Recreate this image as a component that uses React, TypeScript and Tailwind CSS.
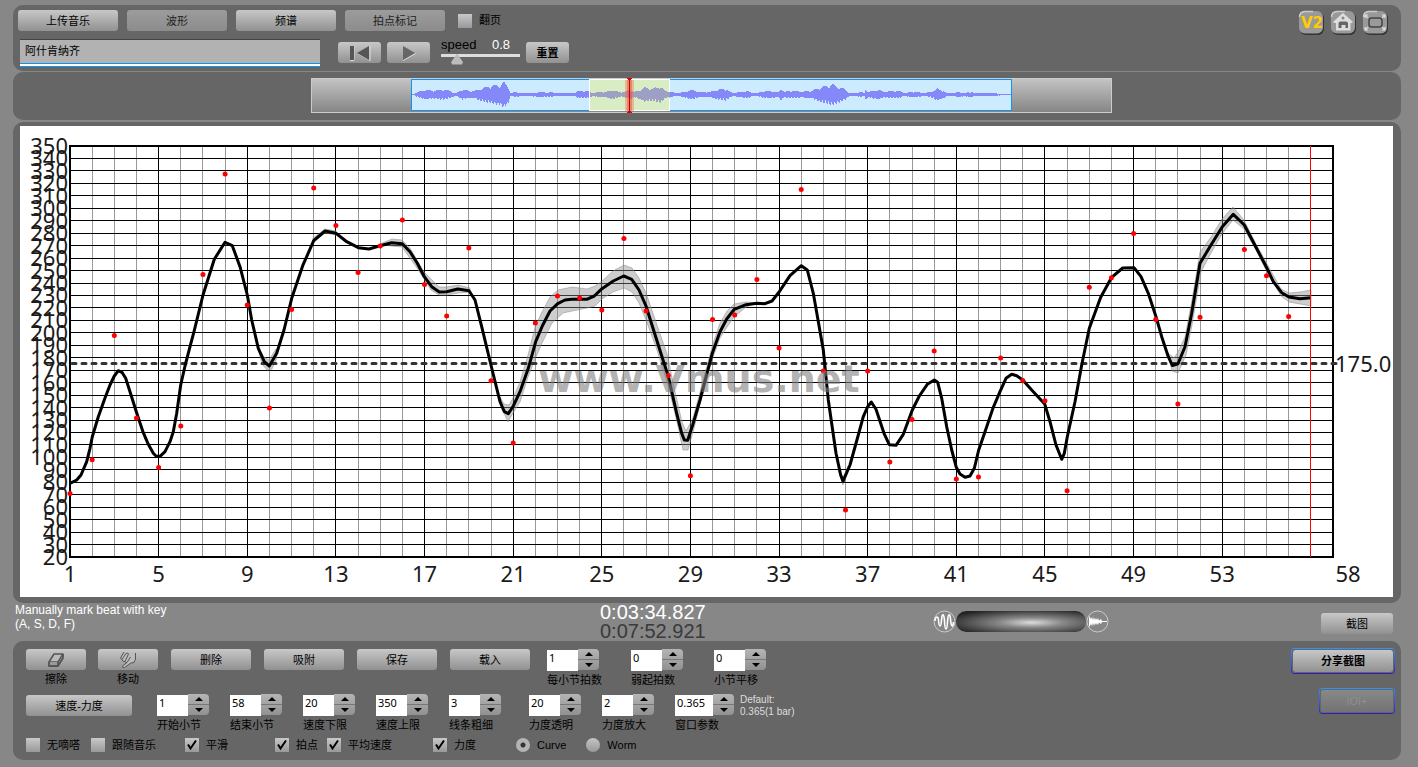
import { useState } from "react";
import type { ReactNode } from "react";
import clsx from "clsx";

const DOTS = [
  493.5, 459.7, 335.5, 418, 467.5, 426, 274.5, 174, 305, 408, 309.5, 188, 225.5,
  272.5, 246, 220, 284.5, 316, 248, 380.7, 443, 323, 296, 298, 310, 238.5, 311,
  375.5, 475.7, 319.5, 315, 279.5, 348, 189.5, 371, 510, 371, 462, 419.5, 351,
  479, 477, 358, 380.5, 400.7, 490.7, 287.3, 277.7, 233.5, 319.5, 404, 317.3,
  null, 249.5, 275.7, 316.5,
];

const CURVE =
  "70,483.3 76.7,480 81,475 86.7,461.7 90,448.3 92.3,436.7 98.3,416.7 105,398 110,385 114.3,376 118.3,370.7 122.3,372.7 125.7,378.3 130,391.7 136.3,411.7 143.3,432.7 148.3,444.3 153.3,453.3 156,456 160,456.3 165,451.7 170,441.7 173.3,431.7 176.7,413.3 180.7,385 185,366 190,346.7 194,331.7 203,295 214.3,259.3 225,242.3 232.3,245.7 240,266.7 247.3,295 251.7,320 258.3,348.3 264.3,361.7 269.3,366 276.7,353.3 284,330 291.7,298.3 302.7,265.7 313.7,240.7 325,231 336,233.3 346.7,241.7 358.3,247.7 369,249 380,245.7 391.7,242.7 402.3,243.7 410,251.7 417.3,263.3 424.3,276.7 431.7,286.7 439.3,292 446.7,291.7 457.7,289 469,290.7 475,300 481.7,326.7 490.7,364 500,401.7 504.3,411.7 508.3,413.7 513.3,406 520,391.7 528.3,368.3 535.7,341.7 542.3,326 550,311 557.7,303.7 565,300 571.7,299.3 586.7,299.3 594.3,296 602,288.7 613.3,281 623.7,276 631.7,279.3 639,290 646,306 656.7,340 668.3,376.7 676.7,413.3 681.7,433.3 684.3,440 687.7,440.3 692.7,425 700,400 708.3,368.3 712.3,353.3 720,331.7 726.7,319 734.3,309.3 746,304.7 757,303.3 765,303.7 772,301 779.3,291.7 790,275.7 801.3,265.7 807.3,270 813.3,293.3 823.3,350 828.3,400 836,453.3 840.7,475 843,481.3 850,465 858.3,435 863.3,416.7 867.7,406.7 871.3,402 876,409.3 884,433.3 889.3,444.7 896,445.3 903.3,434.3 912.3,410 919.3,396 927.3,384.3 934.3,380 937.7,382.3 941.7,398.3 946.7,426.7 951.7,450 956.3,467.3 960,474 965,477.3 970,476 974.3,468.3 978.7,450 985,431.7 993.3,407.3 1000,391.7 1006,378.3 1011.7,374.3 1016.7,375.7 1022.7,380 1033.3,391.7 1044.7,404 1050,421.7 1056,445 1061.7,459.3 1064.3,453.3 1067.3,436.7 1075,401.7 1081.7,365 1089.3,328.3 1100.7,297.3 1111.7,277.3 1122.7,268 1134,267.7 1141,276.7 1148.3,293.3 1156,316.7 1161.7,336.7 1168.3,356.7 1172.3,365.5 1178,363.7 1185,346.7 1191.7,313.3 1200,263.3 1211,245 1222.3,226.7 1233.3,214.3 1244.3,225 1255.7,246.7 1266.7,267.7 1273.3,281.7 1281.7,292.7 1289,297 1300,298.7 1311,297.7";

const BANDS = [
  "258,348 264,357 269,360 276,349 277,358 272,369 267,370 262,364",
  "313,238 325,229 336,231 336,235 325,233 313,243",
  "380,244 392,239 402,240 410,248 424,272 439,287 447,287 458,285 470,288 470,292 458,293 447,295 439,295 431,290 417,268 402,247 391,246",
  "500,397 504,404 509,405 513,398 520,382 528,355 535,327 542,312 550,297 558,290 572,287 587,289 595,286 602,281 613,271 624,265 632,268 639,278 646,293 657,325 668,357 673,383 682,422 686,431 693,418 700,392 712,347 720,323 727,311 734,304 746,302 757,303 746,307 734,317 727,327 720,338 712,360 700,405 693,432 688,450 683,450 677,422 668,385 657,350 646,320 639,303 632,292 624,288 613,292 602,299 595,306 587,308 572,311 563,313 552,323 542,343 536,357 528,377 520,402 513,413 508,422 504,413",
  "838,470 843,477 848,466 843,485",
  "1168,353 1174,358 1178,352 1185,337 1192,300 1200,252 1211,237 1222,219 1233,207 1244,220 1256,244 1267,264 1281,289 1289,293 1300,292 1311,290 1311,306 1300,304 1289,302 1281,296 1267,272 1256,250 1244,229 1233,220 1222,234 1211,253 1201,272 1192,325 1186,355 1178,373 1172,371",
];

// [x, amplitude] pairs of the audio overview
const ENVELOPE = [
  [415, 1], [420, 3], [426, 4], [432, 3], [440, 4], [446, 4], [452, 2], [456, 1],
  [462, 4], [468, 3], [474, 3], [480, 5], [488, 7], [494, 8], [500, 9], [503, 11],
  [508, 7], [510, 1], [516, 2], [520, 1], [530, 1], [540, 2], [560, 1], [575, 1],
  [577, 3], [588, 3], [592, 1], [600, 2], [606, 2], [612, 4], [618, 2], [624, 2],
  [630, 4], [634, 2], [640, 4], [644, 6], [650, 5], [656, 6], [660, 7], [665, 3],
  [670, 2], [676, 1], [684, 2], [690, 4], [695, 3], [700, 2], [710, 2], [718, 4],
  [725, 5], [732, 1], [740, 2], [747, 3], [752, 1], [757, 1], [765, 3], [770, 3],
  [778, 2], [781, 5], [784, 2], [790, 3], [798, 3], [802, 2], [806, 3], [812, 3],
  [818, 6], [824, 7], [831, 9], [838, 7], [845, 4], [849, 1], [856, 1], [860, 2],
  [864, 1], [865, 5], [868, 2], [872, 3], [878, 4], [883, 2], [892, 3], [898, 3],
  [904, 1], [914, 2], [925, 1], [930, 2], [937, 5], [943, 3], [946, 1], [954, 1],
  [958, 2], [964, 1], [970, 2], [975, 1], [985, 1], [1010, 0],
];

const beatX = (beat: number) => 70 + ((beat - 1) * 1263) / 57;
const tempoY = (tempo: number) => 146 + ((350 - tempo) * 411) / 330;

const wavePath = (from: number, to: number) => {
  let d = "";
  for (let i = 0; i < ENVELOPE.length - 1; i++) {
    const [x0, a0] = ENVELOPE[i];
    const [x1, a1] = ENVELOPE[i + 1];
    for (let x = x0; x < x1; x++) {
      if (x < from || x >= to) continue;
      const amp = a0 + ((a1 - a0) * (x - x0)) / (x1 - x0);
      const up = amp * (0.7 + 0.45 * Math.abs(Math.sin(x * 12.9)));
      const down = amp * (0.7 + 0.45 * Math.abs(Math.sin(x * 7.3)));
      d += `M${x + 0.5} ${(94 - up).toFixed(1)}V${(95 + down).toFixed(1)}`;
    }
  }
  return d;
};

const Panel = ({ className, children }: { className?: string; children: ReactNode }) => (
  <section className={clsx("rounded-[10px] bg-[#666]", className)}>{children}</section>
);

interface BtnProps {
  children: ReactNode;
  className?: string;
  pressed?: boolean;
  label?: string;
}

const Btn = ({ children, className, pressed, label }: BtnProps) => (
  <button
    type="button"
    aria-label={label}
    aria-pressed={pressed}
    className={clsx(
      "flex h-[21px] shrink-0 items-center justify-center rounded-[3px] bg-linear-to-b pt-px text-[11px] leading-none whitespace-nowrap",
      pressed
        ? "from-[#9c9c9c] to-[#8c8c8c] text-[#222]"
        : "from-[#c8c8c8] to-[#919191] text-black",
      className
    )}
  >
    {children}
  </button>
);

interface TickProps {
  label: string;
  checked?: boolean;
  className?: string;
}

const Tick = ({ label, checked = false, className }: TickProps) => {
  const [on, setOn] = useState(checked);
  return (
    <label className={clsx("flex h-[14px] items-center gap-[7px] whitespace-nowrap", className)}>
      <span className="relative block h-[14px] w-[14px]">
        <input
          type="checkbox"
          checked={on}
          onChange={() => setOn(!on)}
          className="block h-[14px] w-[14px] appearance-none bg-linear-to-b from-[#c8c8c8] to-[#999]"
        />
        {on && (
          <svg viewBox="0 0 14 14" className="pointer-events-none absolute inset-0">
            <path d="M3 6.500L5.500 10.500L11 2.500" fill="none" stroke="#000" strokeWidth="2" />
          </svg>
        )}
      </span>
      {label}
    </label>
  );
};

interface StepperProps {
  id: string;
  label: string;
  value: string;
  step?: number;
  wide?: boolean;
  className?: string;
}

const Stepper = ({ id, label, value, step = 1, wide, className }: StepperProps) => {
  const [current, setCurrent] = useState(value);
  const bump = (by: number) =>
    setCurrent(String(Number((Number(current) + by).toFixed(3))));

  return (
    <div className={clsx("shrink-0", wide ? "w-[59px]" : "w-[52px]", className)}>
      <div className="flex h-[22px]">
        <input
          id={id}
          value={current}
          onChange={(e) => setCurrent(e.target.value)}
          className={clsx(
            "mt-px h-[21px] bg-white pb-[6px] pl-[2px] font-['Noto_Sans'] text-[11px] leading-none text-black outline-none",
            wide ? "w-[38px]" : "w-[31px]"
          )}
        />
        <div className="flex h-[21px] w-[21px] flex-col overflow-hidden rounded-r-sm bg-linear-to-b from-[#b5b5b5] to-[#919191]">
          <button
            type="button"
            aria-label={`${label} +`}
            onClick={() => bump(step)}
            className="flex flex-1 items-center justify-center border-b border-[#777]"
          >
            <svg width="8" height="4" viewBox="0 0 8 4"><path d="M0 4L4 0L8 4Z" /></svg>
          </button>
          <button
            type="button"
            aria-label={`${label} -`}
            onClick={() => bump(-step)}
            className="flex flex-1 items-center justify-center"
          >
            <svg width="8" height="4" viewBox="0 0 8 4"><path d="M0 0L4 4L8 0Z" /></svg>
          </button>
        </div>
      </div>
      <label htmlFor={id} className="block leading-[18px] whitespace-nowrap">
        {label}
      </label>
    </div>
  );
};

const TopIcon = ({ label, children }: { label: string; children: ReactNode }) => (
  <button type="button" aria-label={label}>
    <svg width="26" height="25" viewBox="0 0 26 25" className="block">
      <rect x="2" y="2" width="24" height="23" rx="6" fill="#333" />
      <rect x="1" y="1" width="24" height="22.500" rx="6" fill="#999" />
      <path d="M1.500 7Q1.500 2 7 1.500H15" fill="none" stroke="#ccc" strokeWidth="1.500" />
      {children}
    </svg>
  </button>
);

const Overview = () => (
  <svg viewBox="311 78 801 35" className="block h-[35px] w-[801px]" shapeRendering="crispEdges">
    <defs>
      <linearGradient id="track" x1="0" y1="0" x2="0" y2="1">
        <stop offset="0" stopColor="#c4c4c4" />
        <stop offset="1" stopColor="#858585" />
      </linearGradient>
    </defs>
    <rect x="311.500" y="78.500" width="800" height="34" fill="url(#track)" stroke="#ccc" />
    <rect x="411.500" y="79.500" width="600" height="31" fill="#cdebff" stroke="#1693ea" />
    <path d="M412 94.500H1011" stroke="#8488f8" />
    <path d={wavePath(411, 590)} stroke="#8488f8" />
    <path d={wavePath(670, 1011)} stroke="#8488f8" />
    <rect x="589.500" y="79.500" width="80" height="31" fill="#d9edc4" stroke="#fff" />
    <path d="M590 94.500H669" stroke="#9da0c4" />
    <path d={wavePath(590, 670)} stroke="#9da0c4" />
    <rect x="625" y="80" width="9" height="31" fill="#f26b55" fillOpacity="0.4" />
    <rect x="627" y="80" width="5" height="31" fill="#e83a30" fillOpacity="0.4" />
    <path d="M629.500 79V112" stroke="#c00000" />
    <path d="M627 78H632L629.500 81ZM627 113H632L629.500 110Z" fill="#e00000" />
  </svg>
);

const TempoChart = () => {
  const tempos = Array.from({ length: 34 }, (_, i) => 350 - i * 10);
  const beats = Array.from({ length: 58 }, (_, i) => i + 1);
  const right = beatX(58);

  return (
    <svg
      viewBox="20 126 1373 471"
      className="block w-full bg-white font-['Noto_Sans',sans-serif]"
      fontSize="22"
      fill="#1a1a1a"
    >
      <g shapeRendering="crispEdges">
        {beats.map((beat) => (
          <line
            key={beat}
            x1={beatX(beat)}
            x2={beatX(beat)}
            y1="146"
            y2="557"
            stroke={beat % 4 === 1 ? "#000" : "#999"}
          />
        ))}
        {tempos.map((tempo) => (
          <line key={tempo} x1="70" x2={right} y1={tempoY(tempo)} y2={tempoY(tempo)} stroke="#000" />
        ))}
        <rect x="70" y="146" width="1263" height="411" fill="none" stroke="#000" strokeWidth="2" />
      </g>

      {tempos.map((tempo) => (
        <text key={tempo} x="68" y={tempoY(tempo) + 8} textAnchor="end">
          {tempo}
        </text>
      ))}
      {beats
        .filter((beat) => beat % 4 === 1 && beat < 57)
        .map((beat) => (
          <text key={beat} x={beatX(beat)} y="582" textAnchor="middle">
            {beat}
          </text>
        ))}
      <text x="1348" y="582" textAnchor="middle">58</text>

      {BANDS.map((points) => (
        <polygon key={points} points={points} fill="#888" fillOpacity="0.42" stroke="#888" strokeOpacity="0.5" />
      ))}
      <line
        x1="72"
        x2="1336"
        y1="363.500"
        y2="363.500"
        stroke="#333"
        strokeWidth="3"
        strokeLinecap="round"
        strokeDasharray="4 6"
      />
      <text x="1335" y="372">175.0</text>
      <polyline points={CURVE} fill="none" stroke="#000" strokeWidth="3" strokeLinejoin="round" />
      {DOTS.map(
        (y, i) => y !== null && <circle key={i} cx={beatX(i + 1)} cy={y} r="2.500" fill="#f00" />
      )}
      <text
        x="699"
        y="392"
        textAnchor="middle"
        fontSize="38"
        fill="#808080"
        fillOpacity="0.6"
        className="font-['DejaVu_Sans'] font-bold"
      >
        www.Vmus.net
      </text>
      <line x1="1310.500" x2="1310.500" y1="146" y2="557" stroke="#f00" />
    </svg>
  );
};

const App = () => {
  const [title, setTitle] = useState("阿什肯纳齐");
  const [speed, setSpeed] = useState("0.8");
  const [view, setView] = useState("Curve");

  return (
    <div className="min-h-screen bg-[#878787] pt-[5px] pr-[17px] pb-[7px] pl-[13px] font-['Liberation_Sans','Noto_Sans_CJK_SC',sans-serif] text-[11px] leading-none text-black">
      <Panel className="flex h-[66px] justify-between">
        <div>
          <div className="flex items-center gap-[9px] pt-[5px] pl-[5px]">
            <Btn className="w-[100px]">上传音乐</Btn>
            <Btn className="w-[100px]" pressed>波形</Btn>
            <Btn className="w-[100px]">频谱</Btn>
            <Btn className="w-[100px]" pressed>拍点标记</Btn>
            <Tick label="翻页" className="ml-1" />
          </div>
          <div className="flex pt-2 pl-[7px]">
            <div className="h-[28px] w-[300px] border-t border-[#444] bg-[#b2b2b2]">
              <input
                aria-label="曲名"
                value={title}
                onChange={(e) => setTitle(e.target.value)}
                className="block h-[23px] w-full px-[5px] pb-1 text-[11px] outline-none"
              />
              <div className="h-1 border-y border-[#0a95f5] bg-white" />
            </div>
            <Btn className="mt-[3px] ml-[18px] w-[43px]" label="回到开头">
              <svg width="22" height="16" viewBox="0 0 22 16">
                <path d="M5 1V15.500H1M21 1V15.500L9 8.500" fill="none" stroke="#ddd" />
                <path d="M1 1H5V15H1ZM20 1V15L8 8Z" fill="#555" />
              </svg>
            </Btn>
            <Btn className="mt-[3px] ml-[6px] w-[43px]" label="播放">
              <svg width="14" height="16" viewBox="0 0 14 16">
                <path d="M1 15.500L13.500 8.500" stroke="#ddd" />
                <path d="M1 1V15L13 8Z" fill="#666" />
              </svg>
            </Btn>
            <div className="ml-[11px] w-[79px]">
              <div className="flex justify-between pr-[10px] text-[13px] leading-[11px]">
                <label htmlFor="speed">speed</label>
                <output htmlFor="speed" className="text-white">{speed}</output>
              </div>
              <input
                id="speed"
                type="range"
                min="0.5"
                max="2.5"
                step="0.1"
                value={speed}
                onChange={(e) => setSpeed(e.target.value)}
                className="block h-[10px] w-full appearance-none bg-transparent [&::-webkit-slider-runnable-track]:h-[3px] [&::-webkit-slider-runnable-track]:bg-[#ddd] [&::-webkit-slider-thumb]:h-[11px] [&::-webkit-slider-thumb]:w-3 [&::-webkit-slider-thumb]:appearance-none [&::-webkit-slider-thumb]:bg-[#bbb] [&::-webkit-slider-thumb]:[clip-path:polygon(50%_0,100%_80%,90%_100%,10%_100%,0_80%)]"
              />
            </div>
            <Btn className="mt-[3px] ml-[6px] w-[43px] font-bold">重置</Btn>
          </div>
        </div>
        <div className="flex items-start gap-[6px] pt-[5px] pr-[13px]">
          <TopIcon label="V2">
            <text x="3" y="18" fontSize="15" fontWeight="bold" fill="#fc0" className="font-['DejaVu_Sans']">
              V2
            </text>
          </TopIcon>
          <TopIcon label="主页">
            <path d="M13 3L3.500 11.500V13H6V20.500H20.500V13H22.500V11.500Z" fill="#ddd" />
            <path d="M8.500 18V13.500Q8.500 11.500 10.500 11.500H16Q18 11.500 18 13.500V18H15.500V15H11.500V18Z" fill="#666" />
            <circle cx="13" cy="8" r="1.500" fill="#888" />
          </TopIcon>
          <TopIcon label="全屏">
            <rect x="7" y="8" width="13" height="9" rx="2.500" fill="#999" stroke="#444" strokeWidth="1.500" />
            <path
              d="M3 8V5H6M3 5L6 8M20 5H23V8M23 5L20 8M3 17V20H6M3 20L6 17M20 20H23V17M23 20L20 17"
              fill="none"
              stroke="#ddd"
              strokeWidth="1.200"
            />
          </TopIcon>
        </div>
      </Panel>

      <Panel className="mt-px flex h-[48px] justify-center pt-[6px] pl-[9px]">
        <Overview />
      </Panel>

      <Panel className="mt-[2px] pt-1 pr-2 pb-[6px] pl-[7px]">
        <TempoChart />
      </Panel>

      <div className="flex h-[38px] items-start">
        <p className="w-[587px] pl-[2px] text-[12px] leading-[14px] text-white">
          Manually mark beat with key
          <br />
          (A, S, D, F)
        </p>
        <div className="text-[20px] leading-[19px]">
          <div className="text-white">0:03:34.827</div>
          <div className="text-[#3a3a3a]">0:07:52.921</div>
        </div>
        <div className="ml-[227px] flex items-center pt-[7px]">
          <svg width="23" height="23" viewBox="0 0 23 23" fill="none" stroke="#fff">
            <circle cx="11.500" cy="11.500" r="10.500" stroke="#ccc" />
            <path
              d="M2 11C2 7 5 5 5.500 10C6 18 8 18 8.500 10C9 3 11 3 11.500 11C12 22 14 21 14.500 12C15 3 17 3 17.500 9C18 17 20 18 20.500 12"
              strokeWidth="1.600"
            />
          </svg>
          <input
            type="range"
            aria-label="音量"
            className="h-[21px] w-[130px] appearance-none rounded-full bg-[radial-gradient(ellipse_at_58%_55%,#ddd,#888_30%,#222_85%)] [&::-webkit-slider-thumb]:appearance-none [&::-webkit-slider-thumb]:opacity-0"
          />
          <svg width="23" height="23" viewBox="0 0 23 23">
            <circle cx="11.500" cy="11.500" r="10.500" fill="none" stroke="#ccc" />
            <path
              d="M3 6L5 9L6 7L7 10L8 7L9 10L10 8L11 10L12 8L13 10.500L15 9L16 11H21V12L16 12L15 14L13 12.500L12 15L11 13L10 15L9 13L8 16L7 13L6 16L5 14L3 17Z"
              fill="#fff"
            />
          </svg>
        </div>
        <Btn className="mt-[10px] mr-2 ml-auto w-[72px]">截图</Btn>
      </div>

      <Panel className="flex justify-between pt-[7px] pb-2">
        <div className="pt-px pl-[13px]">
          <div className="flex h-[38px] items-start">
            <div className="text-center leading-[18px]">
              <Btn className="w-[60px]" label="擦除">
                <svg width="18" height="16" viewBox="0 0 18 16" stroke="#555" strokeLinejoin="round">
                  <path d="M2 10L7 2H16L11 10Z" fill="#bbb" strokeWidth="1.500" />
                  <path d="M2 10V14H11V10M11 14L16 6V2" fill="#999" strokeWidth="1.800" />
                </svg>
              </Btn>
              擦除
            </div>
            <div className="ml-3 text-center leading-[18px]">
              <Btn className="w-[60px]" label="移动">
                <svg width="18" height="18" viewBox="0 0 18 18" fill="#bbb" stroke="#555" strokeLinejoin="round">
                  <path d="M5 1L2 6Q1 8 3 8.500Q3.500 11 6 10.500Q6 12 8 11.500L3.500 15Q3 17 5.500 16.500L12 12L15 11.500L16.500 8V2" />
                  <path d="M3 8.500L6.500 3Q9 1 9.500 3L6 10.500M8 11.500L11.500 6" fill="none" />
                </svg>
              </Btn>
              移动
            </div>
            <div className="ml-[13px] flex gap-[13px]">
              <Btn className="w-[80px]">删除</Btn>
              <Btn className="w-[80px]">吸附</Btn>
              <Btn className="w-[80px]">保存</Btn>
              <Btn className="w-[80px]">载入</Btn>
            </div>
            <Stepper id="beats" label="每小节拍数" value="1" className="ml-[17px]" />
            <Stepper id="upbeat" label="弱起拍数" value="0" className="ml-8" />
            <Stepper id="shift" label="小节平移" value="0" className="ml-[31px]" />
          </div>

          <div className="mt-[7px] flex h-[38px] items-start">
            <Btn className="mt-px w-[106px]">速度-力度</Btn>
            <div className="ml-[25px] flex gap-[21px]">
              <Stepper id="start" label="开始小节" value="1" />
              <Stepper id="end" label="结束小节" value="58" />
              <Stepper id="min" label="速度下限" value="20" />
              <Stepper id="max" label="速度上限" value="350" />
              <Stepper id="line" label="线条粗细" value="3" />
            </div>
            <div className="ml-7 flex gap-[21px]">
              <Stepper id="alpha" label="力度透明" value="20" />
              <Stepper id="zoom" label="力度放大" value="2" />
              <Stepper id="window" label="窗口参数" value="0.365" step={0.005} wide />
            </div>
            <p className="ml-[6px] text-[10px] leading-3 text-[#ddd]">
              Default:
              <br />
              0.365(1 bar)
            </p>
          </div>

          <div className="mt-[6px] flex h-[14px] items-center">
            <Tick label="无嘀嗒" />
            <Tick label="跟随音乐" className="ml-[11px]" />
            <Tick label="平滑" checked className="ml-[29px]" />
            <Tick label="拍点" checked className="ml-[47px]" />
            <Tick label="平均速度" checked className="ml-[9px]" />
            <Tick label="力度" checked className="ml-[41px]" />
            <div className="ml-10 flex gap-5">
              {["Curve", "Worm"].map((name) => (
                <label key={name} className="flex items-center gap-[7px]">
                  <input
                    type="radio"
                    name="view"
                    checked={view === name}
                    onChange={() => setView(name)}
                    className="h-[14px] w-[14px] appearance-none rounded-full bg-linear-to-b from-[#c4c4c4] to-[#999] checked:bg-[radial-gradient(circle,#333_2px,#b4b4b4_3px)]"
                  />
                  {name}
                </label>
              ))}
            </div>
          </div>
        </div>

        <div className="flex flex-col items-end gap-[14px] pr-[6px]">
          <div className="rounded-sm bg-linear-to-b from-[#2d93ff] to-[#3511c8] p-px">
            <div className="rounded-xs bg-[#666] p-px">
              <Btn className="h-[22px] w-[100px] font-bold">分享截图</Btn>
            </div>
          </div>
          <div className="rounded-sm bg-linear-to-b from-[#2d93ff] to-[#3511c8] p-px">
            <div className="rounded-xs bg-[#666] p-px">
              <button
                type="button"
                disabled
                className="block h-[22px] w-[72px] rounded-xs bg-linear-to-b from-[#888] to-[#737373] text-[#8e8e8e]"
              >
                IOI+
              </button>
            </div>
          </div>
        </div>
      </Panel>
    </div>
  );
};

export default App;
